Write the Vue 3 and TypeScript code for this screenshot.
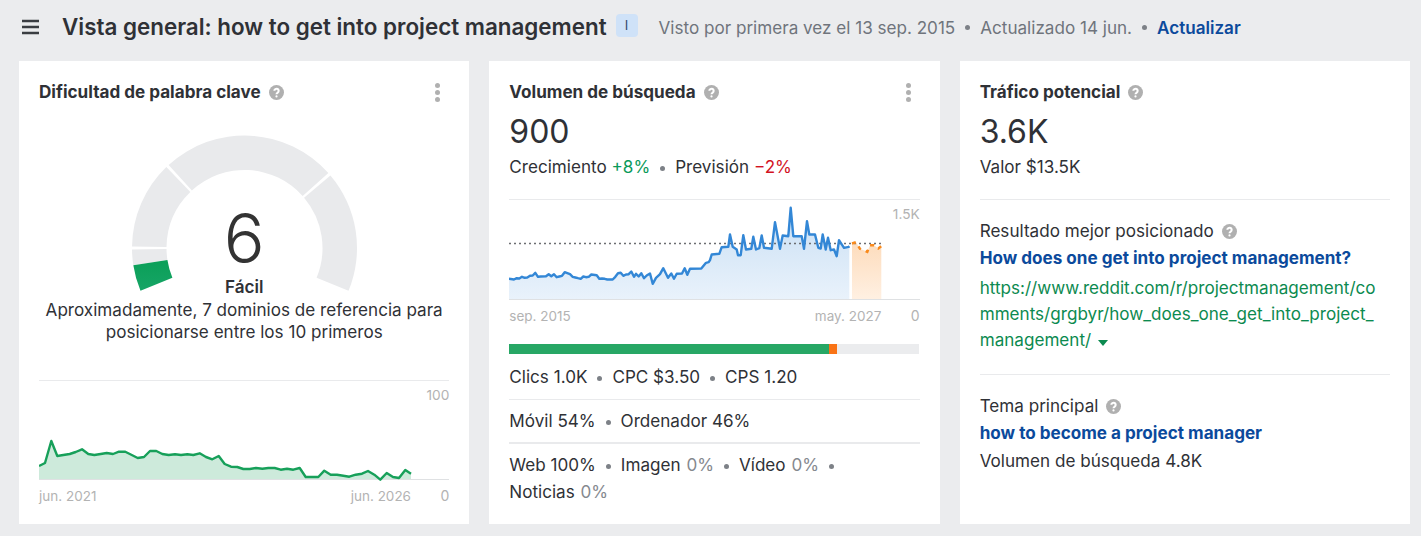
<script setup lang="ts">
type Pt = [number, number]

// 基準位置からSVG座標へ変換してパスを作る
const toPath = (pts: Pt[]) =>
  pts.map(([x, y], i) => `${i ? 'L' : 'M'}${x.toFixed(1)} ${y.toFixed(1)}`).join(' ')
const areaPath = (pts: Pt[], base: number) =>
  `${toPath(pts)} L${pts[pts.length - 1][0].toFixed(1)} ${base} L${pts[0][0].toFixed(1)} ${base} Z`

// ゲージの円弧
const cx = 205.5
const cy = 145
const outer = 112.5
const inner = 78
const polar = (r: number, deg: number) => {
  const a = (deg * Math.PI) / 180
  return `${(cx - r * Math.cos(a)).toFixed(2)} ${(cy - r * Math.sin(a)).toFixed(2)}`
}
const arc = (from: number, to: number) => {
  const large = to - from > 180 ? 1 : 0
  return `M${polar(outer, from)} A${outer} ${outer} 0 ${large} 1 ${polar(outer, to)} L${polar(inner, to)} A${inner} ${inner} 0 ${large} 0 ${polar(inner, from)} Z`
}
const segments = [arc(-8.8, -0.8), arc(0.8, 46), arc(47.6, 138.2), arc(139.8, 202.4)]
const greenArc = arc(-22.4, -8.8)

// 難易度の推移
const kdLine: Pt[] = ([
  [57,288],[75,279],[94,213],[112,258],[130,255],[149,252],[167,246],[186,238],[205,252],[223,255],[242,252],[260,249],[279,252],[297,245],[316,245],[334,254],[353,264],[372,261],[390,243],[409,243],[427,252],[446,255],[465,253],[483,255],[502,253],[520,255],[539,250],[558,261],[577,268],[596,258],[614,282],[633,290],[652,291],[670,297],[689,297],[708,294],[727,296],[745,294],[764,294],[782,299],[801,296],[820,299],[839,294],[857,321],[876,321],[895,321],[913,302],[932,314],[951,314],[970,317],[988,320],[1007,314],[1026,311],[1044,303],[1063,314],[1081,329],[1100,309],[1119,321],[1137,324],[1156,300],[1173,311],
] as Pt[]).map(([x, y]) => [x / 3 - 19, y / 3 - 10] as Pt)

// 検索ボリュームの推移
const volLeft: Pt[] = [
  [27,268],[42,270],[50,266],[58,267],[66,262],[74,265],[82,264],[90,259],[98,258],[106,250],[114,262],[122,261],[138,260],[146,254],[154,260],[162,254],[170,263],[178,261],[186,259],[194,248],[202,251],[210,254],[218,262],[226,264],[234,266],[242,268],[250,261],[258,263],[266,262],[274,255],[290,257],[298,268],[306,267],[314,268],[322,270],[338,270],[346,262],[354,251],[362,250],[370,259],[378,255],[386,254],[394,246],[402,262],[408,253],[416,261],[424,251],[432,266],[440,258],[450,252],[458,283],[468,265],[480,254],[490,236],[504,265],[514,252],[522,268],[530,253],[546,252],[554,236],[562,256],[570,238],[604,237],[618,220],[626,218],
]
const volRight: Pt[] = [
  [0,212],[5,195],[28,193],[35,173],[55,172],[60,135],[68,172],[80,180],[84,197],[92,197],[100,137],[108,180],[124,178],[130,142],[138,180],[148,176],[155,138],[162,175],[185,178],[195,98],[210,178],[218,138],[235,140],[242,55],[250,140],[275,140],[282,178],[291,95],[298,135],[315,135],[325,175],[332,177],[338,135],[347,180],[354,145],[362,182],[372,180],[380,200],[387,152],[402,175],[416,172],[418,170],
]
const forecast: Pt[] = ([
  [426,162],[438,158],[450,178],[472,187],[480,167],[492,167],[505,177],[514,170],
] as Pt[]).map(([x, y]) => [x / 3 + 201, y / 3 - 9.5] as Pt)
const volLine: Pt[] = [
  ...volLeft.map(([x, y]) => [x / 3 - 9, y / 3 - 9.5] as Pt),
  ...volRight.map(([x, y]) => [x / 3 + 201, y / 3 - 9.5] as Pt),
]
</script>

<template>
  <div class="page">
    <header class="top">
      <svg class="menu" width="18" height="16" viewBox="0 0 18 16">
        <path d="M0 2h17M0 8h17M0 14h17" stroke="#3a3d42" stroke-width="2.4" fill="none" />
      </svg>
      <h1>Vista general: how to get into project management</h1>
      <span class="badge">I</span>
      <span class="meta">Visto por primera vez el 13 sep. 2015</span>
      <i class="dot" />
      <span class="meta">Actualizado 14 jun.</span>
      <i class="dot" />
      <a class="refresh">Actualizar</a>
    </header>

    <main class="cards">
      <!-- 難易度 -->
      <section class="card">
        <div class="head">
          <h2>Dificultad de palabra clave</h2>
          <svg class="help" viewBox="0 0 15 15"><circle cx="7.5" cy="7.5" r="7.5" /><path d="M5.3 5.8a2.2 2.1 0 1 1 3.4 1.8c-.8.5-1.2.9-1.2 1.7" /><circle class="q" cx="7.5" cy="11.4" r="1.1" /></svg>
          <svg class="more" width="5" height="19" viewBox="0 0 5 19"><circle cx="2.5" cy="2.5" r="2.5" /><circle cx="2.5" cy="9.5" r="2.5" /><circle cx="2.5" cy="16.5" r="2.5" /></svg>
        </div>
        <div class="gauge">
          <svg width="410" height="196" viewBox="0 0 410 196">
            <defs>
              <linearGradient id="gaugeGreen" x1="0" y1="0" x2="0" y2="1">
                <stop offset="0" stop-color="#0a9f58" />
                <stop offset="1" stop-color="#17a566" />
              </linearGradient>
            </defs>
            <path v-for="d in segments" :key="d" :d="d" fill="#e9eaec" />
            <path :d="greenArc" fill="url(#gaugeGreen)" />
          </svg>
          <div class="gauge-value">
            <span class="big">6</span>
            <strong>Fácil</strong>
          </div>
        </div>
        <p class="desc">Aproximadamente, 7 dominios de referencia para<br />posicionarse entre los 10 primeros</p>
        <div class="chart kd-chart">
          <svg width="410" height="101" viewBox="0 0 410 101">
            <line x1="0" y1="0.5" x2="410" y2="0.5" stroke="#e9eaec" />
            <path :d="areaPath(kdLine, 99.5)" fill="#cdeadb" />
            <line x1="0" y1="99.5" x2="410" y2="99.5" stroke="#dfe1e3" />
            <path :d="toPath(kdLine)" fill="none" stroke="#17a05a" stroke-width="2.4" stroke-linejoin="round" />
          </svg>
          <span class="max">100</span>
          <div class="axis">
            <div class="dates"><span>jun. 2021</span><span>jun. 2026</span></div>
            <span>0</span>
          </div>
        </div>
      </section>

      <!-- 検索ボリューム -->
      <section class="card">
        <div class="head">
          <h2>Volumen de búsqueda</h2>
          <svg class="help" viewBox="0 0 15 15"><circle cx="7.5" cy="7.5" r="7.5" /><path d="M5.3 5.8a2.2 2.1 0 1 1 3.4 1.8c-.8.5-1.2.9-1.2 1.7" /><circle class="q" cx="7.5" cy="11.4" r="1.1" /></svg>
          <svg class="more" width="5" height="19" viewBox="0 0 5 19"><circle cx="2.5" cy="2.5" r="2.5" /><circle cx="2.5" cy="9.5" r="2.5" /><circle cx="2.5" cy="16.5" r="2.5" /></svg>
        </div>
        <div class="number">900</div>
        <div class="line">
          Crecimiento <span class="up">+8%</span><i class="dot" />Previsión <span class="down">−2%</span>
        </div>
        <div class="chart vol-chart">
          <svg width="411" height="101" viewBox="0 0 411 101">
            <defs>
              <linearGradient id="blueFill" x1="0" y1="0" x2="0" y2="1">
                <stop offset="0" stop-color="#c9dff4" />
                <stop offset="1" stop-color="#e9f2fb" />
              </linearGradient>
              <linearGradient id="orangeFill" x1="0" y1="0" x2="0" y2="1">
                <stop offset="0" stop-color="#fddcbc" />
                <stop offset="1" stop-color="#fff0e2" />
              </linearGradient>
            </defs>
            <line x1="0" y1="0.5" x2="411" y2="0.5" stroke="#e9eaec" />
            <path :d="areaPath(volLine, 100)" fill="url(#blueFill)" />
            <path :d="areaPath(forecast, 100)" fill="url(#orangeFill)" />
            <line x1="0" y1="100.5" x2="411" y2="100.5" stroke="#dfe1e3" />
            <line x1="0" y1="44.5" x2="372" y2="44.5" stroke="#6c6e72" stroke-width="1.6" stroke-dasharray="2 3" />
            <path :d="toPath(volLine)" fill="none" stroke="#3387d6" stroke-width="2.4" stroke-linejoin="round" />
            <path :d="toPath(forecast)" fill="none" stroke="#f98a1c" stroke-width="2.5" stroke-dasharray="4 5" />
          </svg>
          <span class="max">1.5K</span>
          <div class="axis">
            <div class="dates"><span>sep. 2015</span><span>may. 2027</span></div>
            <span>0</span>
          </div>
        </div>
        <div class="bar">
          <span class="bar-green" :style="{ width: '320px' }" />
          <span class="bar-orange" :style="{ width: '8px' }" />
        </div>
        <div class="row">Clics 1.0K<i class="dot" />CPC $3.50<i class="dot" />CPS 1.20</div>
        <div class="row">Móvil 54%<i class="dot" />Ordenador 46%</div>
        <div class="row last">
          Web 100%<i class="dot" />Imagen <span class="mute">0%</span><i class="dot" />Vídeo <span class="mute">0%</span><i class="dot" /><br />Noticias <span class="mute">0%</span>
        </div>
      </section>

      <!-- トラフィック -->
      <section class="card">
        <div class="head">
          <h2>Tráfico potencial</h2>
          <svg class="help" viewBox="0 0 15 15"><circle cx="7.5" cy="7.5" r="7.5" /><path d="M5.3 5.8a2.2 2.1 0 1 1 3.4 1.8c-.8.5-1.2.9-1.2 1.7" /><circle class="q" cx="7.5" cy="11.4" r="1.1" /></svg>
        </div>
        <div class="number">3.6K</div>
        <div class="line">Valor $13.5K</div>
        <div class="block first">
          <div class="label">
            Resultado mejor posicionado
            <svg class="help" viewBox="0 0 15 15"><circle cx="7.5" cy="7.5" r="7.5" /><path d="M5.3 5.8a2.2 2.1 0 1 1 3.4 1.8c-.8.5-1.2.9-1.2 1.7" /><circle class="q" cx="7.5" cy="11.4" r="1.1" /></svg>
          </div>
          <a class="link">How does one get into project management?</a>
          <div class="url">
            https://www.reddit.com/r/projectmanagement/comments/grgbyr/how_does_one_get_into_project_management/
            <svg class="caret" width="10" height="6" viewBox="0 0 10 6"><path d="M0 0h10L5 6z" /></svg>
          </div>
        </div>
        <div class="block">
          <div class="label">
            Tema principal
            <svg class="help" viewBox="0 0 15 15"><circle cx="7.5" cy="7.5" r="7.5" /><path d="M5.3 5.8a2.2 2.1 0 1 1 3.4 1.8c-.8.5-1.2.9-1.2 1.7" /><circle class="q" cx="7.5" cy="11.4" r="1.1" /></svg>
          </div>
          <a class="link">how to become a project manager</a>
          <div class="label tail">Volumen de búsqueda 4.8K</div>
        </div>
      </section>
    </main>
  </div>
</template>

<style scoped>
.page {
  width: 1421px;
  height: 536px;
  overflow: hidden;
  background: #ebecee;
  color: #2f3136;
  font-family: Inter, "Noto Sans", sans-serif;
  font-size: 17.1px;
  line-height: 22px;
}

.top {
  display: flex;
  align-items: center;
  height: 61px;
  padding: 0 0 8px 22px;
  box-sizing: border-box;
}

.menu {
  margin-right: 22px;
  flex: none;
}

h1 {
  margin: 0;
  font-size: 22.4px;
  line-height: 30px;
  font-weight: 600;
}

.badge {
  width: 22px;
  height: 23px;
  margin: -2px 21px 0 9px;
  border-radius: 4px;
  background: #cfe2f8;
  font-size: 13px;
  text-align: center;
  line-height: 23px;
  color: #2f4a6a;
}

.meta {
  margin-top: 2px;
  color: #6f747c;
}

.refresh {
  margin-top: 2px;
  color: #0b4a9c;
  font-weight: 600;
}

.dot {
  display: inline-block;
  width: 5px;
  height: 5px;
  margin: 0 10px;
  border-radius: 50%;
  background: #7d8187;
  vertical-align: middle;
}

.top .dot {
  margin-top: 2px;
}

.cards {
  display: grid;
  grid-template-columns: repeat(3, 1fr);
  gap: 20px;
  height: 463px;
  padding: 0 11px 0 19px;
}

.card {
  display: flex;
  flex-direction: column;
  min-width: 0;
  padding: 20px 20px 0;
  background: #fff;
}

.head {
  display: flex;
  align-items: center;
  height: 22px;
}

h2 {
  margin: 0;
  font-size: 17.1px;
  line-height: 22px;
  font-weight: 700;
}

.help {
  width: 15px;
  height: 15px;
  margin-left: 8px;
  flex: none;
  vertical-align: -2px;
}

.help circle {
  fill: #b0b0b0;
}

.help path {
  fill: none;
  stroke: #fff;
  stroke-width: 2;
}

.help .q {
  fill: #fff;
}

.more {
  margin-left: auto;
  margin-right: 9px;
  fill: #b0b0b0;
}

.gauge {
  position: relative;
  height: 196px;
  flex: none;
}

.gauge-value {
  position: absolute;
  left: 0;
  right: 0;
  top: 103px;
  display: flex;
  flex-direction: column;
  align-items: center;
}

.big {
  font-size: 68px;
  line-height: 64px;
  font-weight: 300;
  color: #333;
}

.gauge-value strong {
  margin-top: 6px;
  font-weight: 600;
}

.desc {
  margin: 0;
  text-align: center;
}

.chart {
  position: relative;
}

.chart svg {
  display: block;
}

.kd-chart {
  margin-top: 37px;
}

.kd-chart .axis {
  margin-top: 5px;
}

.vol-chart {
  margin-top: 21px;
}

.max {
  position: absolute;
  right: 0;
  top: 6px;
  font-size: 13.7px;
  line-height: 18px;
  color: #b3b3b3;
}

.axis {
  display: flex;
  justify-content: space-between;
  width: 100%;
  margin-top: 6px;
  font-size: 13.5px;
  line-height: 20px;
  color: #b3b3b3;
}

.axis > span {
  font-size: 14px;
}

.dates {
  display: flex;
  justify-content: space-between;
  width: 372px;
}

.number {
  margin-top: 5px;
  font-size: 32px;
  line-height: 48px;
  font-weight: 400;
}

.line {
  height: 22px;
}

.up {
  color: #0b9a5a;
}

.down {
  color: #d3121f;
}

.bar {
  display: flex;
  height: 10px;
  margin: 18px 1px 0 0;
  background: #ebecee;
  flex: none;
}

.bar-green {
  background: #27a765;
}

.bar-orange {
  background: #f97316;
}

.row {
  padding: 12px 0 11px;
  border-bottom: 1px solid #e9eaec;
}

.row + .row {
  padding: 10px 0;
  border-bottom-width: 2px;
}

.row.last {
  padding: 7px 0 0;
  border-bottom: 0;
  line-height: 27px;
}

.mute {
  color: #85898f;
  margin-left: 1px;
}

.block {
  margin-top: 21px;
  padding-top: 20px;
  border-top: 1px solid #e9eaec;
}

.label {
  display: flex;
  align-items: center;
}

.tail {
  margin-top: 6px;
}

.link {
  display: block;
  margin-top: 5px;
  color: #0b4a9c;
  font-weight: 700;
}

.url {
  margin-top: 6px;
  padding-right: 5px;
  line-height: 26px;
  color: #0c8a50;
  word-break: break-all;
}

.caret {
  fill: #0c8a50;
  margin-left: 2px;
}
</style>
